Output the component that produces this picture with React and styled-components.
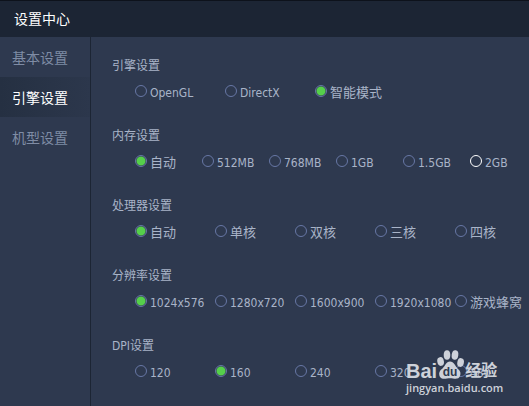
import { useState } from "react";
import styled, { createGlobalStyle } from "styled-components";

const GlobalStyle = createGlobalStyle`
  * {
    box-sizing: border-box;
  }

  body {
    margin: 0;
    background-color: #2e394f;
    font-family: "DejaVu Sans Condensed", "Noto Sans CJK SC", sans-serif;
  }
`;

const Container = styled.div`
  min-height: 100vh;
  display: flex;
  flex-direction: column;
  color: #a9b4c8;
`;

const Header = styled.header`
  height: 37px;
  padding: 0 14px;
  display: flex;
  align-items: center;
  border-top: 1px solid #0d121b;
  background-color: #1c2534;
`;

const Title = styled.h1`
  margin: 0;
  font-size: 14px;
  font-weight: 400;
  line-height: 20px;
  color: #ffffff;
`;

const Wrapper = styled.div`
  flex: 1;
  display: flex;
`;

const Sidebar = styled.nav`
  width: 91px;
  flex-shrink: 0;
  border-right: 1px solid #1c2534;
`;

const MenuItem = styled.a`
  height: 40px;
  padding-left: 12px;
  display: flex;
  align-items: center;
  font-size: 14px;
  text-decoration: none;
  color: ${(props) => (props.$active ? "#ffffff" : "#7f8ca5")};
  background: ${(props) =>
    props.$active ? "linear-gradient(to right, #253042, #2c374c)" : "none"};
`;

const Content = styled.main`
  flex: 1;
  min-width: 0;
  padding: 19px 0 0 21px;
`;

const Group = styled.fieldset`
  height: 70px;
  min-width: 0;
  margin: 0;
  padding: 0;
  border: none;
`;

const Legend = styled.legend`
  padding: 0;
  font-size: 12px;
  line-height: 20px;
`;

const Options = styled.div`
  padding: 7px 0 0 23px;
  display: grid;
  grid-template-columns: repeat(6, ${(props) => props.$step}px);
`;

const Option = styled.label`
  height: 20px;
  display: flex;
  align-items: center;
  gap: 3px;
  font-size: ${(props) => (props.$latin ? 12 : 13)}px;
  line-height: 20px;
  white-space: nowrap;
`;

const Radio = styled.input`
  appearance: none;
  flex-shrink: 0;
  width: 12px;
  height: 12px;
  margin: 0 0 4px;
  border: 1px solid #6777a5;
  border-radius: 50%;

  &:checked {
    background: radial-gradient(circle, #56d04b 4px, transparent 5px);
  }

  &:hover {
    border-color: #ffffff;
  }
`;

const HighlightedRadio = styled(Radio)`
  border-color: #ffffff;
`;

const Watermark = styled.div`
  position: absolute;
  top: 349px;
  left: 406px;
  color: #cdd1d9;
  font-family: "Open Sans", "Noto Sans CJK SC", sans-serif;
`;

const Brand = styled.div`
  height: 32px;
  display: flex;
  align-items: flex-end;
  font-family: "Liberation Sans", "Noto Sans CJK SC", sans-serif;
  font-size: 20px;
  font-weight: 700;
  line-height: 20px;
`;

const BrandSuffix = styled.span`
  font-size: 16px;
`;

const Site = styled.div`
  font-size: 11px;
  font-weight: 600;
  line-height: 14px;
`;

const groups = [
  {
    name: "engine",
    title: "引擎设置",
    step: 90,
    options: ["OpenGL", "DirectX", "智能模式"],
    selected: "智能模式",
  },
  {
    name: "memory",
    title: "内存设置",
    step: 67,
    options: ["自动", "512MB", "768MB", "1GB", "1.5GB", "2GB"],
    selected: "自动",
    highlighted: "2GB",
  },
  {
    name: "cpu",
    title: "处理器设置",
    step: 80,
    options: ["自动", "单核", "双核", "三核", "四核"],
    selected: "自动",
  },
  {
    name: "resolution",
    title: "分辨率设置",
    step: 80,
    options: ["1024x576", "1280x720", "1600x900", "1920x1080", "游戏蜂窝"],
    selected: "1024x576",
  },
  {
    name: "dpi",
    title: "DPI设置",
    step: 80,
    options: ["120", "160", "240", "320", "480"],
    selected: "160",
  },
];

const Paw = () => (
  <svg width="28" height="32" viewBox="0 0 28 32" fill="currentColor">
    <ellipse cx="3.6" cy="12.5" rx="3.3" ry="4.4" transform="rotate(-10 3.6 12.5)" />
    <ellipse cx="10" cy="6" rx="3.3" ry="4.8" />
    <ellipse cx="18" cy="6" rx="3.3" ry="4.8" transform="rotate(8 18 6)" />
    <ellipse cx="23.6" cy="13.5" rx="3.3" ry="4.4" transform="rotate(10 23.6 13.5)" />
    <path d="M13 12.500c4 0 5 4 7.500 7 3 2.500 3.500 4.500 2.500 7.500s-4 3-7 2.500c-2-.4-4-.4-6 0-3 .6-6.500.5-7.500-2.500s0-5.500 3-7.500c3-3 3.500-7 7.500-7z" />
    <text
      x="13"
      y="27"
      fill="#2e394f"
      fontFamily="Liberation Sans"
      fontSize="12"
      fontWeight="700"
      textAnchor="middle"
    >
      du
    </text>
  </svg>
);

const SettingGroup = ({ group }) => {
  const [selected, setSelected] = useState(group.selected);

  return (
    <Group>
      <Legend>{group.title}</Legend>
      <Options $step={group.step}>
        {group.options.map((option) => {
          const Input = option === group.highlighted ? HighlightedRadio : Radio;
          return (
            <Option key={option} $latin={/^[\w.]+$/.test(option)}>
              <Input
                type="radio"
                name={group.name}
                checked={selected === option}
                onChange={() => setSelected(option)}
              />
              {option}
            </Option>
          );
        })}
      </Options>
    </Group>
  );
};

const App = () => {
  return (
    <Container>
      <GlobalStyle />
      <Header>
        <Title>设置中心</Title>
      </Header>
      <Wrapper>
        <Sidebar>
          <MenuItem href="#basic">基本设置</MenuItem>
          <MenuItem href="#engine" $active>
            引擎设置
          </MenuItem>
          <MenuItem href="#model">机型设置</MenuItem>
        </Sidebar>
        <Content>
          {groups.map((group) => (
            <SettingGroup key={group.name} group={group} />
          ))}
        </Content>
      </Wrapper>
      <Watermark>
        <Brand>
          Bai
          <Paw />
          <BrandSuffix>经验</BrandSuffix>
        </Brand>
        <Site>jingyan.baidu.com</Site>
      </Watermark>
    </Container>
  );
};

export default App;
